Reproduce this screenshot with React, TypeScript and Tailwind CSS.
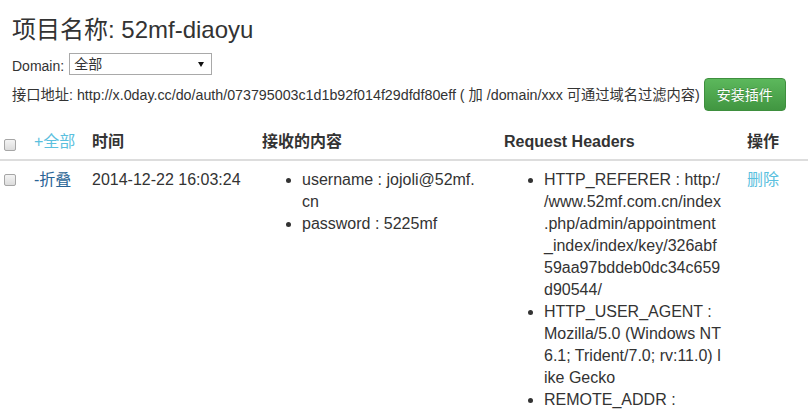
import React from "react";

// each item is split into the lines the reference shows
const fields = [
  ["username : jojoli@52mf.", "cn"],
  ["password : 5225mf"],
];

const headers = [
  [
    "HTTP_REFERER : http:/",
    "/www.52mf.com.cn/index",
    ".php/admin/appointment",
    "_index/index/key/326abf",
    "59aa97bddeb0dc34c659",
    "d90544/",
  ],
  ["HTTP_USER_AGENT :", "Mozilla/5.0 (Windows NT", "6.1; Trident/7.0; rv:11.0) l", "ike Gecko"],
  ["REMOTE_ADDR :"],
];

function Lines({ lines }: { lines: string[] }) {
  return (
    <li>
      {lines.map((l, i) => (
        <span key={i} className="block whitespace-nowrap">
          {l}
        </span>
      ))}
    </li>
  );
}

function Checkbox({ top }: { top: string }) {
  return (
    <div className={`h-[22px] ${top}`}>
      <div className="w-[12px] h-[12px] border border-[#a6a6a6] rounded-[2px] bg-gradient-to-b from-[#f4f4f4] to-[#dcdcdc]" />
    </div>
  );
}

export default function App() {
  return (
    <div className="w-[808px] h-[415px] overflow-hidden bg-white text-[#333] font-['Liberation_Sans','Noto_Sans_CJK_SC',sans-serif]">
      <div className="px-3 pt-[16px]">
        <h3 className="text-[24px] leading-[27px] font-normal">项目名称: 52mf-diaoyu</h3>

        <div className="flex items-start mt-[10px] text-[14px]">
          <span className="leading-[22px] pt-[2px]">Domain:</span>
          <div className="ml-[5px] w-[143px] h-[22px] border border-[#a9a9a9] bg-white flex items-center justify-between pl-[4px] pr-[7px]">
            <span className="leading-[20px]">全部</span>
            <svg width="6" height="5" viewBox="0 0 6 5">
              <polygon points="0,0 6,0 3,5" fill="#111" />
            </svg>
          </div>
        </div>

        <div className="flex items-center mt-[1px] text-[14.25px] leading-[20px]">
          <span className="whitespace-nowrap">
            接口地址: http://x.0day.cc/do/auth/073795003c1d1b92f014f29dfdf80eff ( 加 /domain/xxx 可通过域名过滤内容)
          </span>
          <button className="ml-[4px] shrink-0 w-[82px] h-[33px] rounded-[4px] border border-[#3e8f3e] bg-gradient-to-b from-[#5cb85c] to-[#419641] text-white text-[14px] [text-shadow:0_-1px_0_rgba(0,0,0,0.2)]">
            安装插件
          </button>
        </div>
      </div>

      <table className="mt-[12px] w-full table-fixed border-collapse text-[16px] leading-[22px]">
        <colgroup>
          <col className="w-[26px]" />
          <col className="w-[58px]" />
          <col className="w-[170px]" />
          <col className="w-[242px]" />
          <col className="w-[243px]" />
          <col className="w-[69px]" />
        </colgroup>
        <thead>
          <tr className="border-b-2 border-[#ddd] text-left align-bottom">
            <th className="pl-[4px] pt-2 pb-[6px] font-normal">
              <Checkbox top="pt-[8px]" />
            </th>
            <th className="pl-2 pt-2 pb-[6px] font-normal text-[#5bc0de]">+全部</th>
            <th className="pl-2 pt-2 pb-[6px] font-bold">时间</th>
            <th className="pl-2 pt-2 pb-[6px] font-bold">接收的内容</th>
            <th className="pl-2 pt-2 pb-[6px] font-bold">Request Headers</th>
            <th className="pl-2 pt-2 pb-[6px] font-bold">操作</th>
          </tr>
        </thead>
        <tbody>
          <tr className="align-top">
            <td className="pl-[4px] pt-2">
              <Checkbox top="pt-[5px]" />
            </td>
            <td className="pl-2 pt-2 text-[#2a6496]">-折叠</td>
            <td className="pl-2 pt-2 pr-2 whitespace-nowrap">2014-12-22 16:03:24</td>
            <td className="pl-2 pt-2 pr-[15px]">
              <ul className="list-disc pl-[40px]">
                {fields.map((f, i) => (
                  <Lines key={i} lines={f} />
                ))}
              </ul>
            </td>
            <td className="pl-2 pt-2 pr-[16px]">
              <ul className="list-disc pl-[40px]">
                {headers.map((h, i) => (
                  <Lines key={i} lines={h} />
                ))}
              </ul>
            </td>
            <td className="pl-2 pt-2 text-[#5bc0de]">删除</td>
          </tr>
        </tbody>
      </table>
    </div>
  );
}
